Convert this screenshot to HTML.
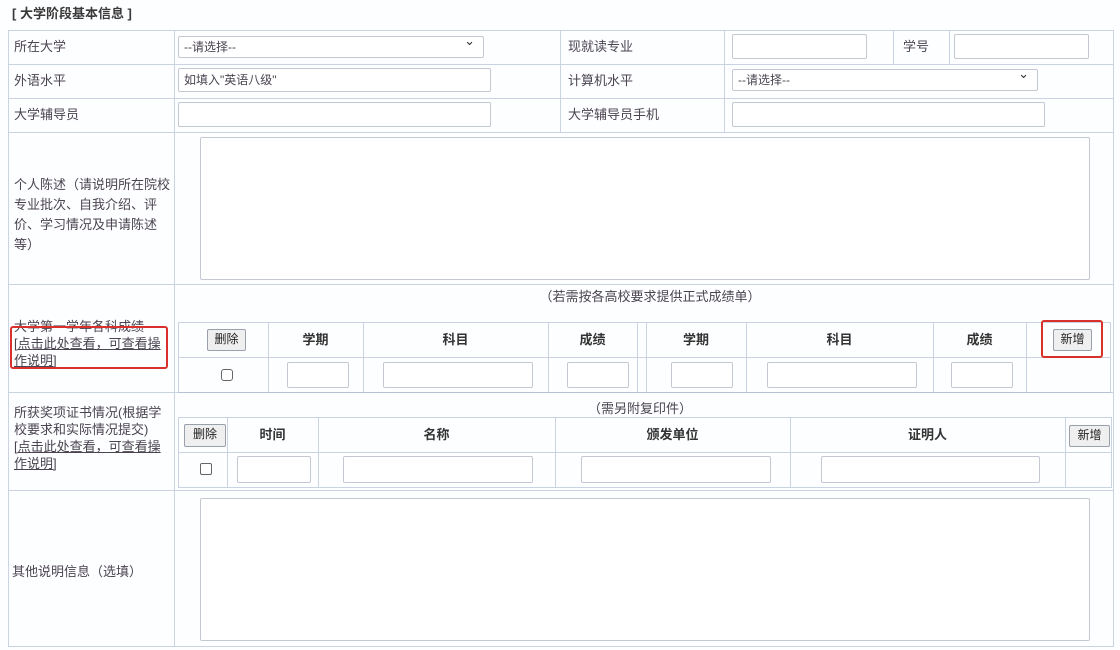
<!DOCTYPE html>
<html><head><meta charset="utf-8"><style>
*{box-sizing:border-box;margin:0;padding:0}
body{width:1120px;height:650px;background:#fdfeff;font-family:"Liberation Sans","Noto Sans CJK SC",sans-serif;font-size:13px;color:#4a4450;position:relative;overflow:hidden}
.a{position:absolute}
.h{position:absolute;height:1px;background:#c9d3e2}
.v{position:absolute;width:1px;background:#c9d3e2}
.in{position:absolute;border:1px solid #c4c8d0;background:#fff;border-radius:2px}
.t{position:absolute;white-space:nowrap;line-height:16px}
.c{position:absolute;text-align:center;white-space:nowrap;line-height:16px}
.btn{position:absolute;border:1px solid #9aa0aa;background:#efefef;border-radius:2px;font-size:12px;color:#222;text-align:center;line-height:19px}
.cb{position:absolute;width:12px;height:12px;border:1px solid #666;border-radius:3px;background:#fff}
.red{position:absolute;border:2px solid #d9302c;border-radius:3px}
.sel:after{content:"⌄";position:absolute;right:8px;top:-4px;font-size:13px;color:#333}
.b{font-weight:bold;color:#333}
</style></head><body>
<div class="t b" style="left:12px;top:6px;color:#3a3a3a">[ 大学阶段基本信息 ]</div>

<div class="h" style="left:8px;top:30px;width:1105px"></div>
<div class="h" style="left:8px;top:64px;width:1105px"></div>
<div class="h" style="left:8px;top:98px;width:1105px"></div>
<div class="h" style="left:8px;top:132px;width:1105px"></div>
<div class="h" style="left:8px;top:284px;width:1105px"></div>
<div class="h" style="left:8px;top:392px;width:1105px"></div>
<div class="h" style="left:8px;top:490px;width:1105px"></div>
<div class="h" style="left:8px;top:646px;width:1105px"></div>
<div class="v" style="left:8px;top:30px;height:617px"></div>
<div class="v" style="left:174px;top:30px;height:617px"></div>
<div class="v" style="left:1113px;top:30px;height:617px"></div>
<div class="v" style="left:560px;top:30px;height:102px"></div>
<div class="v" style="left:724px;top:30px;height:102px"></div>
<div class="v" style="left:893px;top:30px;height:34px"></div>
<div class="v" style="left:949px;top:30px;height:34px"></div>

<div class="t" style="left:14px;top:39px">所在大学</div>
<div class="in sel" style="left:178px;top:36px;width:306px;height:22px"><span class="t" style="left:5px;top:2px;font-size:12px">--请选择--</span></div>
<div class="t" style="left:568px;top:39px">现就读专业</div>
<div class="in" style="left:732px;top:34px;width:135px;height:25px"></div>
<div class="t" style="left:903px;top:39px">学号</div>
<div class="in" style="left:954px;top:34px;width:135px;height:25px"></div>

<div class="t" style="left:14px;top:73px">外语水平</div>
<div class="in" style="left:178px;top:68px;width:313px;height:24px"><span class="t" style="left:5px;top:3px;font-size:12px">如填入"英语八级"</span></div>
<div class="t" style="left:568px;top:73px">计算机水平</div>
<div class="in sel" style="left:732px;top:69px;width:306px;height:22px"><span class="t" style="left:5px;top:2px;font-size:12px">--请选择--</span></div>

<div class="t" style="left:14px;top:107px">大学辅导员</div>
<div class="in" style="left:178px;top:102px;width:313px;height:25px"></div>
<div class="t" style="left:568px;top:107px">大学辅导员手机</div>
<div class="in" style="left:732px;top:102px;width:313px;height:25px"></div>

<div class="t" style="left:14px;top:175px;line-height:20px;white-space:normal;width:162px">个人陈述（请说明所在院校专业批次、自我介绍、评价、学习情况及申请陈述等）</div>
<div class="in" style="left:200px;top:137px;width:890px;height:143px"></div>

<div class="t" style="left:14px;top:318px;line-height:17px;white-space:normal;width:156px">大学第一学年各科成绩<br><span style="text-decoration:underline">[点击此处查看，可查看操作说明]</span></div>
<div class="red" style="left:10px;top:326px;width:158px;height:43px"></div>
<div class="c" style="left:500px;top:289px;width:300px">（若需按各高校要求提供正式成绩单）</div>
<div class="h" style="left:178px;top:322px;width:933px"></div>
<div class="h" style="left:178px;top:357px;width:933px"></div>
<div class="h" style="left:178px;top:392px;width:933px;background:#b8c2d2"></div>
<div class="v" style="left:178px;top:322px;height:70px"></div>
<div class="v" style="left:268px;top:322px;height:70px"></div>
<div class="v" style="left:363px;top:322px;height:70px"></div>
<div class="v" style="left:548px;top:322px;height:70px"></div>
<div class="v" style="left:637px;top:322px;height:70px"></div>
<div class="v" style="left:646px;top:322px;height:70px"></div>
<div class="v" style="left:746px;top:322px;height:70px"></div>
<div class="v" style="left:933px;top:322px;height:70px"></div>
<div class="v" style="left:1026px;top:322px;height:70px"></div>
<div class="v" style="left:1110px;top:322px;height:70px"></div>
<div class="btn" style="left:207px;top:329px;width:39px;height:22px">删除</div>
<div class="c b" style="left:268px;top:332px;width:95px">学期</div>
<div class="c b" style="left:363px;top:332px;width:185px">科目</div>
<div class="c b" style="left:548px;top:332px;width:89px">成绩</div>
<div class="c b" style="left:646px;top:332px;width:100px">学期</div>
<div class="c b" style="left:746px;top:332px;width:187px">科目</div>
<div class="c b" style="left:933px;top:332px;width:93px">成绩</div>
<div class="btn" style="left:1053px;top:329px;width:39px;height:22px">新增</div>
<div class="red" style="left:1041px;top:320px;width:62px;height:38px"></div>
<div class="cb" style="left:221px;top:369px"></div>
<div class="in" style="left:287px;top:362px;width:62px;height:26px"></div>
<div class="in" style="left:383px;top:362px;width:150px;height:26px"></div>
<div class="in" style="left:567px;top:362px;width:62px;height:26px"></div>
<div class="in" style="left:671px;top:362px;width:62px;height:26px"></div>
<div class="in" style="left:767px;top:362px;width:150px;height:26px"></div>
<div class="in" style="left:951px;top:362px;width:62px;height:26px"></div>

<div class="t" style="left:14px;top:404px;line-height:17px;white-space:normal;width:156px">所获奖项证书情况(根据学校要求和实际情况提交)<br><span style="text-decoration:underline">[点击此处查看，可查看操作说明]</span></div>
<div class="c" style="left:540px;top:401px;width:200px">（需另附复印件）</div>
<div class="h" style="left:178px;top:417px;width:934px"></div>
<div class="h" style="left:178px;top:452px;width:934px"></div>
<div class="h" style="left:178px;top:487px;width:934px"></div>
<div class="v" style="left:178px;top:417px;height:70px"></div>
<div class="v" style="left:227px;top:417px;height:70px"></div>
<div class="v" style="left:318px;top:417px;height:70px"></div>
<div class="v" style="left:555px;top:417px;height:70px"></div>
<div class="v" style="left:790px;top:417px;height:70px"></div>
<div class="v" style="left:1065px;top:417px;height:70px"></div>
<div class="v" style="left:1111px;top:417px;height:70px"></div>
<div class="btn" style="left:184px;top:424px;width:42px;height:23px">删除</div>
<div class="c b" style="left:227px;top:427px;width:91px">时间</div>
<div class="c b" style="left:318px;top:427px;width:237px">名称</div>
<div class="c b" style="left:555px;top:427px;width:235px">颁发单位</div>
<div class="c b" style="left:790px;top:427px;width:275px">证明人</div>
<div class="btn" style="left:1069px;top:425px;width:41px;height:22px">新增</div>
<div class="cb" style="left:200px;top:463px;border-radius:2px"></div>
<div class="in" style="left:237px;top:456px;width:74px;height:27px"></div>
<div class="in" style="left:343px;top:456px;width:190px;height:27px"></div>
<div class="in" style="left:581px;top:456px;width:190px;height:27px"></div>
<div class="in" style="left:821px;top:456px;width:219px;height:27px"></div>

<div class="t" style="left:12px;top:564px">其他说明信息（选填）</div>
<div class="in" style="left:200px;top:498px;width:890px;height:143px"></div>
</body></html>
